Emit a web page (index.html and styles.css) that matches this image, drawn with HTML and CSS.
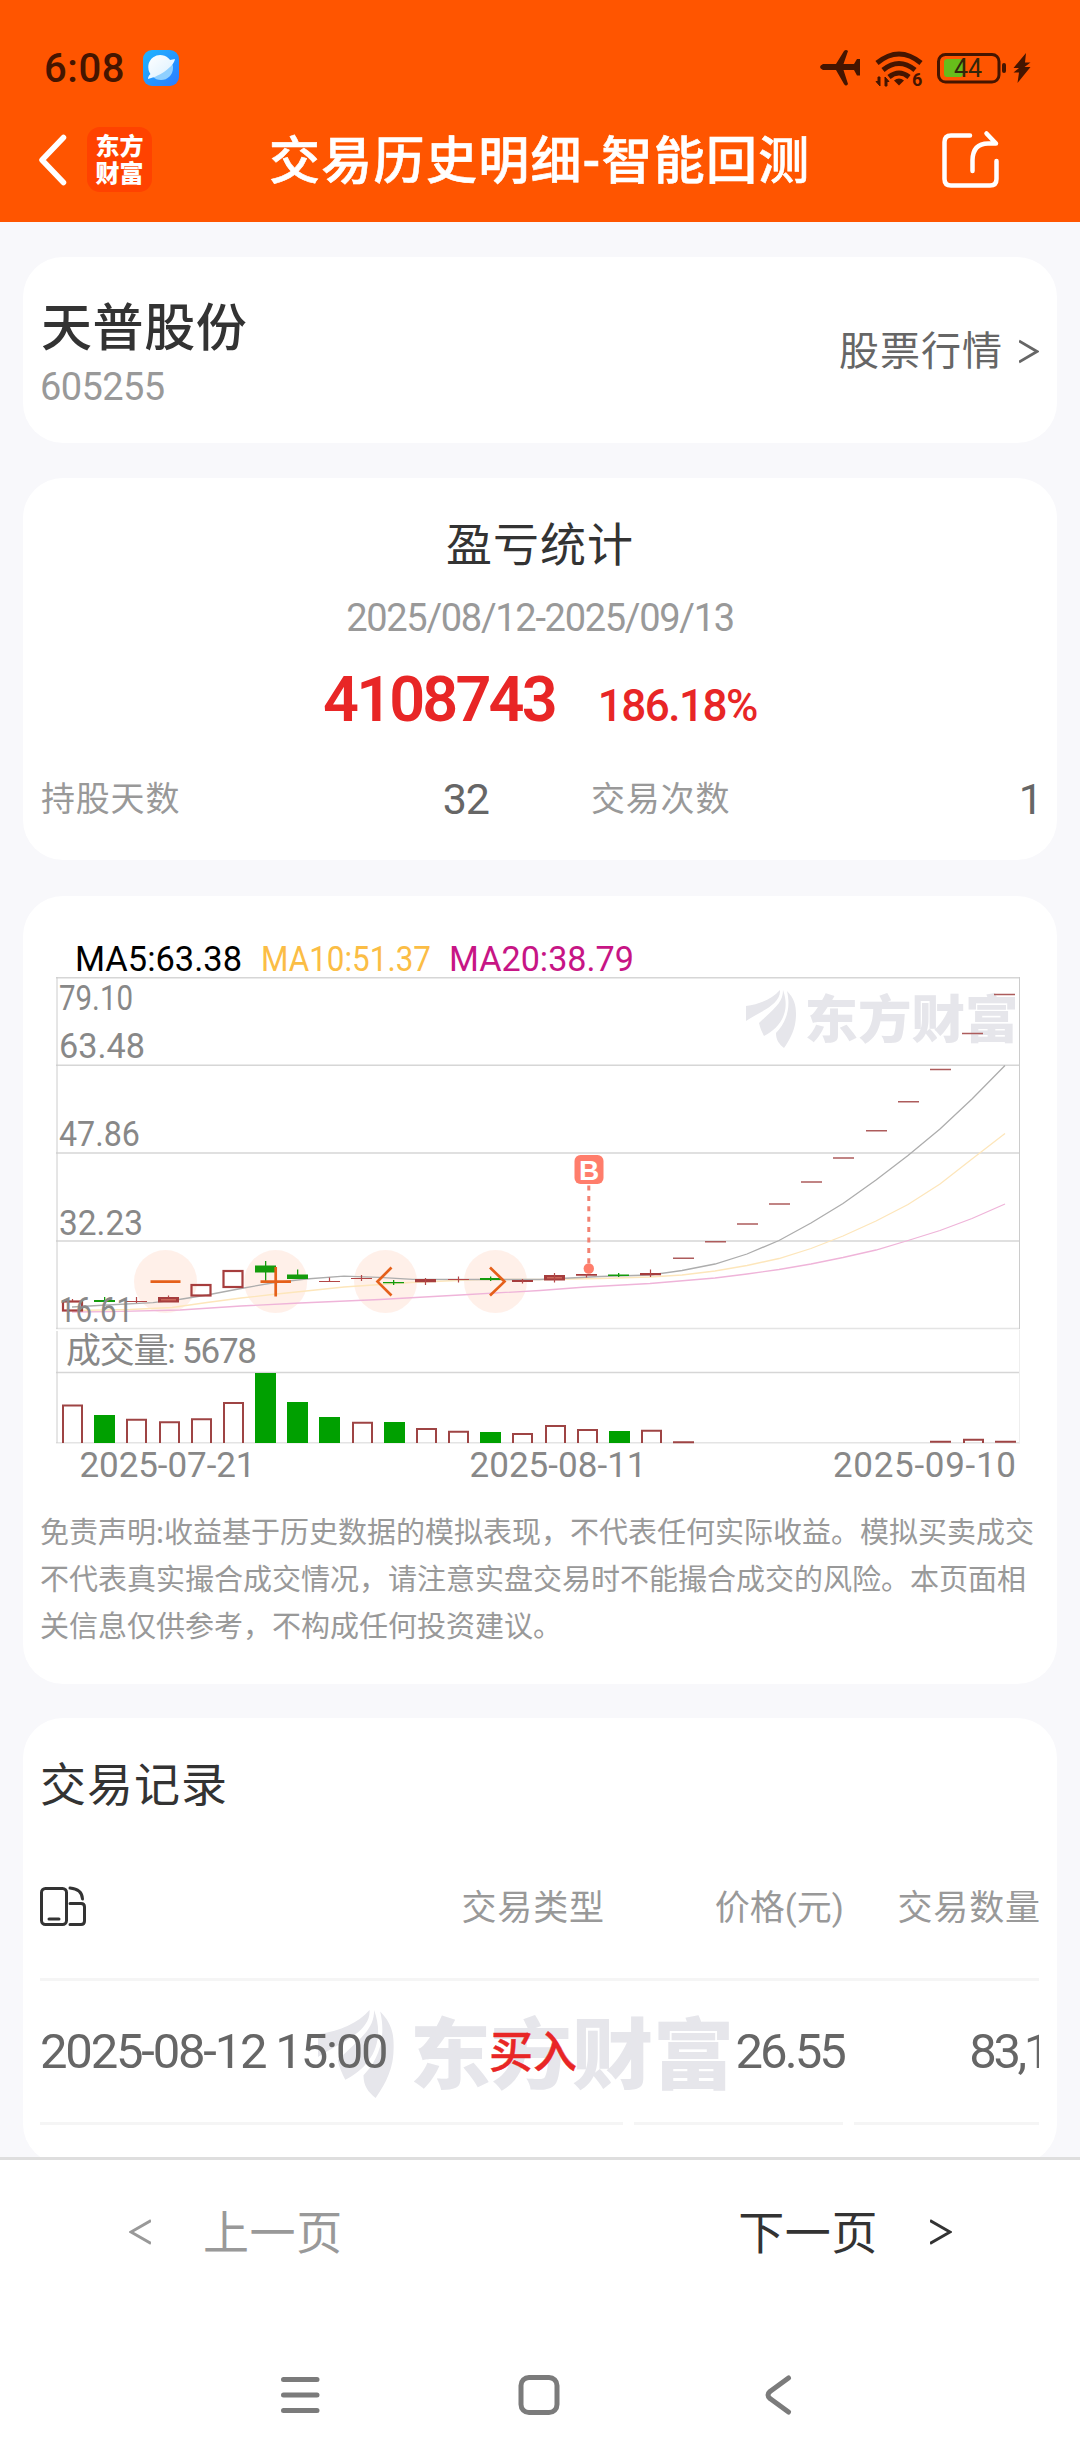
FILE: index.html
```html
<!DOCTYPE html>
<html lang="zh-CN">
<head>
<meta charset="utf-8">
<title>交易历史明细-智能回测</title>
<link rel="stylesheet" href="styles.css">
</head>
<body>
<svg width="0" height="0" class="defs">
  <symbol id="flame" viewBox="0 0 50 60">
    <path d="M0 16C14 14 26 9 34 0C35 15 13 22 0 31Z"/>
    <path d="M37 0C37 12 30 17 13 33C14 38 16 42 18 46C34 38 45 22 37 0Z"/>
    <path d="M41 1C48 8 50 15 50 24C50 38 45 48 38 58C33 54 30 50 30 43C37 36 46 22 41 1Z"/>
  </symbol>
</svg>
<div class="phone">
  <header class="top">
    <div class="status">
      <span class="clock">6:08</span>
      <svg class="planet" width="36" height="36" viewBox="0 0 36 36">
        <defs>
          <linearGradient id="sky" x1="0" y1="0" x2="1" y2="1"><stop offset="0" stop-color="#1fb6ff"/><stop offset="1" stop-color="#2b7bff"/></linearGradient>
          <linearGradient id="ball" x1="0" y1="0" x2="1" y2="1"><stop offset="0" stop-color="#fff"/><stop offset="1" stop-color="#d8efff"/></linearGradient>
        </defs>
        <rect width="36" height="36" rx="9" fill="url(#sky)"/>
        <circle cx="18" cy="18" r="12" fill="#8fd0ff"/>
        <path d="M7.5 24A12 12 0 0 1 27 10L32 9C31 16 18 26 5 29C5 27 6 25 7.5 24Z" fill="url(#ball)"/>
      </svg>
      <span class="grow"></span>
      <svg width="212" height="50" viewBox="820 43 212 50" fill="#451500">
        <path d="M823 64H836L844 51Q846 49 848 51L843.500 64H854L857 59H860V75.500H857L854 70H843.500L848 84Q846 87 844 84L836 70H823Q817 67 823 64Z"/>
        <g fill="none" stroke="#451500" stroke-width="5">
          <path d="M877 63Q899 45 921 63"/><path d="M883 70Q899 57 915 70"/><path d="M889 77Q899 69 909 77"/>
        </g>
        <path d="M894 80.500Q899 76.500 904 80.500L899 85.500Z"/>
        <path d="M880 77V86L876 81.500H878V77ZM885 86V77L889 81.500H887V86Z" stroke="#451500" stroke-width="1"/>
        <text x="912" y="86" class="st-6">6</text>
        <rect x="944" y="59" width="19" height="18" rx="3" fill="#67bd1b"/>
        <rect x="938.500" y="54.500" width="60.500" height="27.500" rx="7" fill="none" stroke="#451500" stroke-width="3"/>
        <rect x="1002" y="63" width="4" height="10" rx="2"/>
        <text x="954" y="77" class="st-44">44</text>
        <path d="M1026 53L1013.500 68H1019L1013.500 72.500H1019L1017.500 83L1030.500 67H1024.500L1030.500 62.500H1025Z"/>
      </svg>
    </div>
    <div class="appbar">
      <svg width="30" height="52" viewBox="0 0 30 52"><path d="M26.500 3.500L5 26L26.500 48.500" fill="none" stroke="#fff" stroke-width="5.500" stroke-linecap="round" stroke-linejoin="round"/></svg>
      <div class="logo"><span>东方</span><span>财富</span></div>
      <h1>交易历史明细-智能回测</h1>
      <svg class="share" width="60" height="60" viewBox="940 130 60 60" fill="none" stroke="#fff" stroke-width="4.500" stroke-linecap="round" stroke-linejoin="round"><path d="M970 135.500H951Q944.500 135.500 944.500 142V179Q944.500 185.500 951 185.500H990Q996.500 185.500 996.500 179V161M972.500 171V160Q973 143.500 988 143.500H996L986.500 133.500"/></svg>
    </div>
  </header>

  <main class="content">
    <section class="card stock">
      <div>
        <div class="stock-name">天普股份</div>
        <div class="stock-code">605255</div>
      </div>
      <div class="quote"><span>股票行情</span><svg width="20" height="26" viewBox="0 0 20 26"><path d="M0 2L18 12.500L0 23" fill="none" stroke="#666" stroke-width="2.800"/></svg></div>
    </section>

    <section class="card stats">
      <h2>盈亏统计</h2>
      <div class="range">2025/08/12-2025/09/13</div>
      <div class="profit"><b>4108743</b><strong>186.18%</strong></div>
      <dl>
        <dt>持股天数</dt><dd>32</dd>
        <dt>交易次数</dt><dd>1</dd>
      </dl>
    </section>

    <section class="card chart-card">
      <svg class="chart" width="1034" height="560" viewBox="23 930 1034 560">
        <g fill="#e6e6eb">
          <use href="#flame" x="746" y="990" width="50" height="60"/>
          <text x="804.500" y="1038" class="mark-text" textLength="214" lengthAdjust="spacingAndGlyphs">东方财富</text>
        </g>
        <g class="legend">
          <text x="75" y="970.500" textLength="167" lengthAdjust="spacingAndGlyphs">MA5:63.38</text>
          <text x="261" y="970.500" textLength="170" lengthAdjust="spacingAndGlyphs" fill="#fbbd45">MA10:51.37</text>
          <text x="449" y="970.500" textLength="185" lengthAdjust="spacingAndGlyphs" fill="#c71585">MA20:38.79</text>
        </g>
        <g stroke="#d6d6d6" stroke-width="1.600" fill="none">
          <path d="M56 977.800H1020M56 1065.300H1020M56 1153H1020M56 1241H1020M56 1372.500H1020"/>
          <path d="M56 1328.500H1020M56 1442.700H1020" stroke="#e4e4e4"/>
          <path d="M57 977V1329M57 1331V1443M1019.500 977V1329" stroke="#ccc" stroke-width="1"/>
          <path d="M1019.500 1330V1443" stroke="#eee" stroke-width="1"/>
        </g>
        <g fill="#ff5500" fill-opacity=".085"><circle cx="165.500" cy="1281.600" r="31.500"/><circle cx="275.700" cy="1281.600" r="31.500"/><circle cx="385.500" cy="1281.600" r="31.500"/><circle cx="495.500" cy="1281.600" r="31.500"/></g>
        <g fill="none" stroke-width="1.300">
          <path stroke="#efb4d9" d="M72 1312L110 1311.600L180 1310L241 1306L300 1303L380 1299.500L460 1295L540 1290.500L586 1287L650 1283.500L715 1278L747 1274L779 1269.500L811 1264L843 1257.500L876 1250L908 1240.500L940 1230.500L972 1218.500L1005 1204"/>
          <path stroke="#fde6bb" d="M72 1310.500L130 1309.500L172 1307.500L207 1302.500L241 1298L272 1294.500L306 1291L344 1287L410 1282.500L480 1279.500L540 1279.500L600 1278.500L650 1277L682 1275L715 1271L747 1265.500L779 1258.500L811 1248.500L843 1236L876 1221L908 1204.500L940 1184L972 1159L1005 1133.500"/>
          <path stroke="#adadad" d="M72 1307L107 1305L153 1302.600L179 1299.500L207 1295L241 1288.500L272 1283L306 1279L344 1276.200L379 1277.300L413 1279.300L480 1279.500L540 1279.500L600 1276.500L650 1275L682 1270.500L715 1264L747 1254L779 1240.500L811 1223L843 1203.500L876 1180L908 1155.500L940 1129L972 1099L1005 1065.500"/>
        </g>
        <g fill="none" stroke="#a63d3d" stroke-width="2.200">
          <rect x="63" y="1301.500" width="19" height="9"/>
          <rect x="191.500" y="1285" width="19" height="10.500"/>
          <rect x="223.500" y="1271" width="19" height="16"/>
        </g>
        <g fill="#a63d3d">
          <path d="M158 1297h21v5.500h-21zM415 1279h21v3.200h-21zM512 1280h21v2h-21zM544 1275h21v5.500h-21zM576 1274h21v1.800h-21zM640 1273h21v2.200h-21z"/>
        </g>
        <path fill="#cc6659" d="M161 1299h15v1.500h-15zM547 1277h15v1.500h-15z"/>
        <path stroke="#b34747" stroke-width="1.200" fill="none" d="M126 1301.500h21M136.500 1297v6M72.500 1299v2M168.500 1295.500v2M319 1281.500h21M329.500 1277.500v4M351 1278.500h21M361.500 1275v6M425.500 1278v7M448 1279.500h21M458.500 1276.500v6M522.500 1279v4.500M554.500 1273v9.500M586.500 1274v3.500M650.500 1269.500v7.500"/>
        <path stroke="#ad5c5c" stroke-width="1.500" fill="none" d="M673 1258.200h21M705 1241.800h21M737 1224h21M769 1204h21M801 1182h21M833 1158h21M866 1130.800h21M898 1101.700h21M930 1069.500h21M962 1033.500h21M994 994.500h21"/>
        <g fill="#149b0c"><path d="M94 1300h21v2h-21zM104 1297h1.300v7h-1.300zM255 1265.500h21v7h-21zM265 1261h1.300v20h-1.300zM287 1274.500h21v4.500h-21zM297 1269.500h1.300v8h-1.300zM383 1282h21v1.300h-21zM393 1280h1.300v5h-1.300zM480 1278h21v2h-21zM490 1276.500h1.300v4.500h-1.300zM608 1274.500h21v1.500h-21zM618 1273h1.300v4h-1.300z"/></g>
        <g class="labels">
          <text x="59" y="1010" textLength="74" lengthAdjust="spacingAndGlyphs">79.10</text>
          <text x="59" y="1057.500" textLength="86" lengthAdjust="spacingAndGlyphs">63.48</text>
          <text x="59" y="1146" textLength="81" lengthAdjust="spacingAndGlyphs">47.86</text>
          <text x="59" y="1234.800" textLength="84" lengthAdjust="spacingAndGlyphs">32.23</text>
          <text x="59" y="1321.700" textLength="74" lengthAdjust="spacingAndGlyphs">16.61</text>
          <text x="66" y="1362.500" textLength="191">成交量: 5678</text>
          <text x="79.500" y="1476.700" textLength="176">2025-07-21</text>
          <text x="469.500" y="1476.700" textLength="177">2025-08-11</text>
          <text x="833" y="1476.700" textLength="183">2025-09-10</text>
        </g>
        <g fill="none" stroke="#e5601a" stroke-width="2.700"><path d="M150.500 1281.600h30M260.500 1281.600h30.500M275.700 1267v29.500"/><path d="M391.500 1267.500L377.500 1281.600L391.500 1295.500M490 1267.500L504.500 1281.600L490 1295.500"/></g>
        <g fill="#ff7d6b"><rect x="574.500" y="1155" width="29" height="29" rx="6"/><circle cx="588.800" cy="1268.500" r="5.200"/></g>
        <path d="M588.800 1185.500V1264" stroke="#f28272" stroke-width="3" stroke-dasharray="5 5.400"/>
        <text x="589.200" y="1179.500" class="buy-mark">B</text>
        <path fill="#00a000" d="M94 1415h21v28h-21zM255 1373h21v70h-21zM287 1402h21v41h-21zM319 1417h21v26h-21zM384 1422h21v21h-21zM480 1432h21v11h-21zM609 1431h21v12h-21z"/>
        <path fill="none" stroke="#9e4444" stroke-width="2" d="M63 1443v-37.500h19V1443M127 1443v-23.200h19V1443M160 1443v-20.800h19V1443M192 1443v-23.800h19V1443M224 1443v-40h19V1443M353 1443v-20.300h19V1443M417 1443v-14h19V1443M449 1443v-11.300h19V1443M513 1443v-9h19V1443M546 1443v-17h19V1443M578 1443v-13h19V1443M642 1443v-12.200h19V1443M673 1442.200h21M930 1441.700h21M964 1443v-3.200h19V1443M995 1441.700h21"/>
      </svg>
      <p class="notice">免责声明:收益基于历史数据的模拟表现，不代表任何实际收益。模拟买卖成交<br>不代表真实撮合成交情况，请注意实盘交易时不能撮合成交的风险。本页面相<br>关信息仅供参考，不构成任何投资建议。</p>
    </section>

    <section class="card records">
      <h3>交易记录</h3>
      <div class="table">
        <svg class="mark" width="420" height="91" viewBox="0 0 277 60" fill="#e6e6eb"><use href="#flame" width="50" height="60"/><text x="60.500" y="48" class="mark-text" textLength="214" lengthAdjust="spacingAndGlyphs">东方财富</text></svg>
        <div class="row head">
          <span><svg class="rotate" width="48" height="42" viewBox="0 0 48 42" fill="none" stroke="#333" stroke-width="3" stroke-linecap="round"><rect x="1.500" y="2.500" width="25" height="36" rx="4"/><path d="M9 33H19M30 2Q42 3 42.500 13M30 17.500H41Q44.500 17.500 44.500 21V35Q44.500 38.500 41 38.500H30"/></svg></span>
          <span>交易类型</span><span class="price">价格(元)</span><span class="qty">交易数量</span>
        </div>
        <div class="row item">
          <span class="time">2025-08-12 15:00</span><span class="buy">买入</span><span>26.55</span><span class="qty">83,1</span>
        </div>
        <div class="rules"><i></i><i></i><i></i></div>
      </div>
    </section>
  </main>

  <nav class="pager">
    <div class="prev"><svg width="22" height="28" viewBox="0 0 22 28"><path d="M22 2.500L2 14L22 25.500" fill="none" stroke="#999" stroke-width="3"/></svg><span>上一页</span></div>
    <div class="next"><span>下一页</span><svg width="22" height="28" viewBox="0 0 22 28"><path d="M0 2.500L20 14L0 25.500" fill="none" stroke="#333" stroke-width="3"/></svg></div>
  </nav>
  <footer class="keys">
    <svg width="520" height="44" viewBox="276 2373 520 44" fill="none" stroke="#7b7b7b" stroke-width="5" stroke-linecap="round" stroke-linejoin="round"><path d="M283.500 2379.500H317M283.500 2395H317M283.500 2410.500H317"/><rect x="521" y="2377.500" width="36" height="35" rx="8"/><path d="M788.500 2378L770 2391.500Q766 2395 770 2398.500L788.500 2412"/></svg>
  </footer>
</div>
</body>
</html>
```

FILE: styles.css
```css
* { box-sizing: border-box; margin: 0; padding: 0; }
body { font-family: Roboto, "Noto Sans CJK SC", sans-serif; background: #f8f8fb; color: #333; }
.defs { position: absolute; }
.mark-text { font: 900 51px "Noto Sans CJK SC", sans-serif; }
.phone { width: 1080px; height: 2460px; display: flex; flex-direction: column; overflow: hidden; }

.top { height: 222px; background: #ff5500; color: #fff; flex: none; }
.status { height: 120px; padding: 16px 48px 0 44px; display: flex; align-items: center; }
.clock { font-size: 40px; font-weight: 500; color: #451500; width: 99px; letter-spacing: .6px; }
.grow { flex: 1; }
.st-6 { font: 700 18px Roboto, sans-serif; }
.st-44 { font: 400 25px Roboto, sans-serif; fill: #33260a; }
.appbar { height: 102px; padding: 0 80px 23px 37px; display: flex; align-items: center; }
.logo { width: 65px; height: 65px; margin-left: 20px; border-radius: 13px; background: #ff4200; display: flex; flex-direction: column; justify-content: center; align-items: center; font: 900 24px/27px "Noto Sans CJK SC", sans-serif; padding-bottom: 3px; }
.appbar h1 { font-size: 51px; font-weight: 500; line-height: 60px; letter-spacing: 1.3px; margin: 4px 0 0 117px; white-space: nowrap; -webkit-text-stroke: .6px #fff; }
.share { margin-left: auto; }

.content { height: 1935px; flex: none; overflow: hidden; padding: 35px 23px 0; }
.card { background: #fff; border-radius: 40px; padding: 0 18px; }
.stock { height: 186px; display: flex; align-items: center; justify-content: space-between; }
.stock-name { font-size: 51px; font-weight: 500; line-height: 64px; letter-spacing: .6px; margin-top: 6px; }
.stock-code { font-size: 38px; line-height: 44px; letter-spacing: -.6px; color: #999; margin: 4px 0 0 -1px; }
.quote { display: flex; align-items: center; gap: 16px; font-size: 40px; letter-spacing: 1px; line-height: 50px; color: #666; padding: 3px 0 0; }

.stats { height: 382px; margin-top: 35px; padding-top: 37px; text-align: center; }
.stats h2 { font-size: 46px; font-weight: 400; line-height: 60px; letter-spacing: 1px; }
.range { font-size: 38px; line-height: 44px; letter-spacing: -1.300px; color: #999; margin-top: 21px; }
.profit { display: flex; justify-content: center; align-items: baseline; gap: 43px; margin-top: 22px; line-height: 76px; color: #e82626; }
.profit b { font-size: 63px; font-weight: 600; letter-spacing: -2.900px; }
.profit strong { font-size: 44px; font-weight: 500; letter-spacing: -1.500px; }
.stats dl { display: grid; grid-template-columns: 200px 248px 250px 1fr; line-height: 50px; margin-top: 30px; }
.stats dt { font-size: 34px; letter-spacing: .8px; color: #999; text-align: left; }
.stats dt:nth-of-type(2) { padding-left: 102px; white-space: nowrap; }
.stats dd { font-size: 43px; letter-spacing: -1px; color: #666; text-align: right; }
.stats dd:last-child { margin-right: -3px; }

.chart-card { height: 788px; margin-top: 36px; padding: 34px 0 0; }
.chart { display: block; font: 35px Roboto, "Noto Sans CJK SC", sans-serif; }
.labels { fill: #888; }
.buy-mark { font: 700 28px "Liberation Sans", sans-serif; fill: #fff; text-anchor: middle; }
.notice { margin: 17px 0 0 17px; font: 29px/47px "Noto Sans CJK SC", sans-serif; color: #999; white-space: nowrap; }

.records { height: 446px; margin-top: 34px; padding: 37px 18px 0 17px; }
.records h3 { font-size: 46px; font-weight: 400; line-height: 60px; letter-spacing: 1px; }
.table { position: relative; margin-top: 19px; width: 999px; overflow: hidden; }
.mark { position: absolute; left: 278px; top: 176px; }
.row { position: relative; display: grid; grid-template-columns: 400px 165px 239px 195px; align-items: center; text-align: right; white-space: nowrap; }
.head { height: 147px; border-bottom: 3px solid #f5f5f5; font-size: 35px; letter-spacing: .9px; color: #999; padding-bottom: 4px; }
.head span:first-child { text-align: left; line-height: 0; }
.rotate { margin-top: 5px; }
.head .price { letter-spacing: 0; }
.head .qty { margin-right: -2px; }
.item { height: 141px; font-size: 49px; letter-spacing: -2.900px; color: #666; }
.item .time { text-align: left; letter-spacing: -2.200px; }
.item .buy { color: #e82626; font-size: 44px; font-weight: 500; letter-spacing: 0; padding: 0 28px 5px 0; -webkit-text-stroke: .4px #e82626; }
.item .qty { margin-right: -9px; letter-spacing: -3.400px; }
.rules { display: grid; grid-template-columns: 583px 209px 185px; gap: 11px; }
.rules i { height: 3px; background: #f5f5f5; }

.pager { flex: none; height: 146px; border-top: 3px solid #dedede; background: #fff; display: flex; justify-content: space-between; padding: 0 128px 0 129px; font-size: 46px; }
.prev, .next { display: flex; align-items: center; gap: 52px; letter-spacing: .6px; }
.prev span, .next span { margin-top: -6px; }
.prev { color: #999; }
.keys { flex: 1; background: #fff; display: flex; justify-content: center; padding: 70px 8px 0 0; }
```
